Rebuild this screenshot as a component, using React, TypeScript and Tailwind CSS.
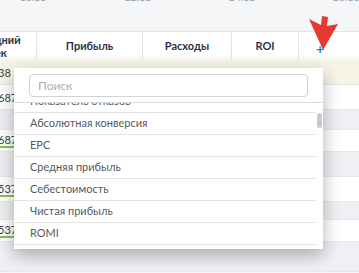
import React from 'react';

const items = ['Абсолютная конверсия', 'EPC', 'Средняя прибыль', 'Себестоимость', 'Чистая прибыль', 'ROMI'];

const rows: { h: string; bg: string; val?: string; line?: boolean }[] = [
  { h: 'h-[25px]', bg: 'bg-[#f7f4e7]', val: '38 :' },
  { h: 'h-[25px]', bg: 'bg-white', val: '687' },
  { h: 'h-[20px]', bg: 'bg-[#eef0f3]' },
  { h: 'h-[22px]', bg: 'bg-white', val: '687', line: true },
  { h: 'h-[25px]', bg: 'bg-[#eef0f3]' },
  { h: 'h-[25px]', bg: 'bg-white', val: '537', line: true },
  { h: 'h-[18px]', bg: 'bg-[#eef0f3]' },
  { h: 'h-[22px]', bg: 'bg-white', val: '537', line: true },
  { h: 'h-[30px]', bg: 'bg-[#eef0f3]' },
];

export default function App() {
  return (
    <div
      className="relative w-[359px] h-[273px] overflow-hidden bg-[#f5f6f8]"
      style={{ fontFamily: 'Lato, "Noto Sans", sans-serif' }}
    >
      {/* ось времени графика, видна только нижняя кромка */}
      <div className="h-[39px] relative">
        <div className="flex text-[10px] text-[#9aa0a8] -mt-[8px] leading-[11px]">
          <span className="ml-[20px] w-[109px]">16:11</span>
          <span className="w-[108px]">22:11</span>
          <span className="w-[108px]">24:11</span>
          <span>26:11</span>
        </div>
      </div>

      {/* шапка таблицы */}
      <div className="flex h-[29px] bg-white border-t border-[#e3e5e8] text-[11px] font-bold text-[#2b3243] shadow-[inset_0_-6px_6px_-4px_rgba(0,0,0,0.05)]">
        <div className="-ml-[40px] w-[77px] border-r border-[#e3e5e8] flex items-center justify-center text-center leading-[13px]">
          Средний<br />чек
        </div>
        <div className="w-[106px] border-r border-[#e3e5e8] flex items-center justify-center">Прибыль</div>
        <div className="w-[89px] border-r border-[#e3e5e8] flex items-center justify-center">Расходы</div>
        <div className="w-[67px] border-r border-[#e3e5e8] flex items-center justify-center">ROI</div>
        <div className="flex-1 flex items-center justify-center pr-[18px]">
          <span className="text-[#1a8ad4] text-[14px] font-bold leading-none mt-[6px]">+</span>
        </div>
      </div>

      {/* строки таблицы */}
      <div className="flex flex-col text-[11px] text-[#3a3f48]">
        {rows.map((r, i) => (
          <div key={i} className={`${r.h} ${r.bg} border-b border-[#e6e8eb] flex items-center`}>
            {r.val && (
              <span className={`-ml-[2px] leading-[13px] ${r.line ? 'border-b-2 border-[#8bc34a]' : ''}`}>{r.val}</span>
            )}
          </div>
        ))}
      </div>

      {/* выпадающий список */}
      <div className="absolute left-[14px] top-[68px] w-[309px] h-[181px] bg-white shadow-[0_6px_16px_rgba(0,0,0,0.3)] flex flex-col">
        <div className="px-[15px] pt-[6px] pb-[5px] border-b border-[#dcdcdc]">
          <div className="h-[23px] border border-[#cfd2d6] rounded-[4px] flex items-center px-[8px] text-[12px] text-[#a9adb3]">
            Поиск
          </div>
        </div>
        <div className="relative flex-1 overflow-hidden">
          <div className="flex flex-col -mt-[12px] mr-[7px] text-[11px] text-[#555a60]">
            <div className="h-[22px] border-b border-[#e4e4e4] flex items-center pl-[16px]">Показатель отказов</div>
            {items.map((t) => (
              <div key={t} className="h-[22px] border-b border-[#e4e4e4] flex items-center pl-[16px]">
                {t}
              </div>
            ))}
          </div>
          <div className="absolute right-[1px] top-[10px] w-[5px] h-[15px] rounded-full bg-[#c9c9c9]" />
        </div>
      </div>

      {/* красная стрелка */}
      <svg className="absolute left-0 top-0" width="359" height="60" viewBox="0 0 359 60">
        <polygon points="309,19 321,25 322,16 328,17 327,26 338,24 323,50" fill="#e53a2f" />
      </svg>
    </div>
  );
}
